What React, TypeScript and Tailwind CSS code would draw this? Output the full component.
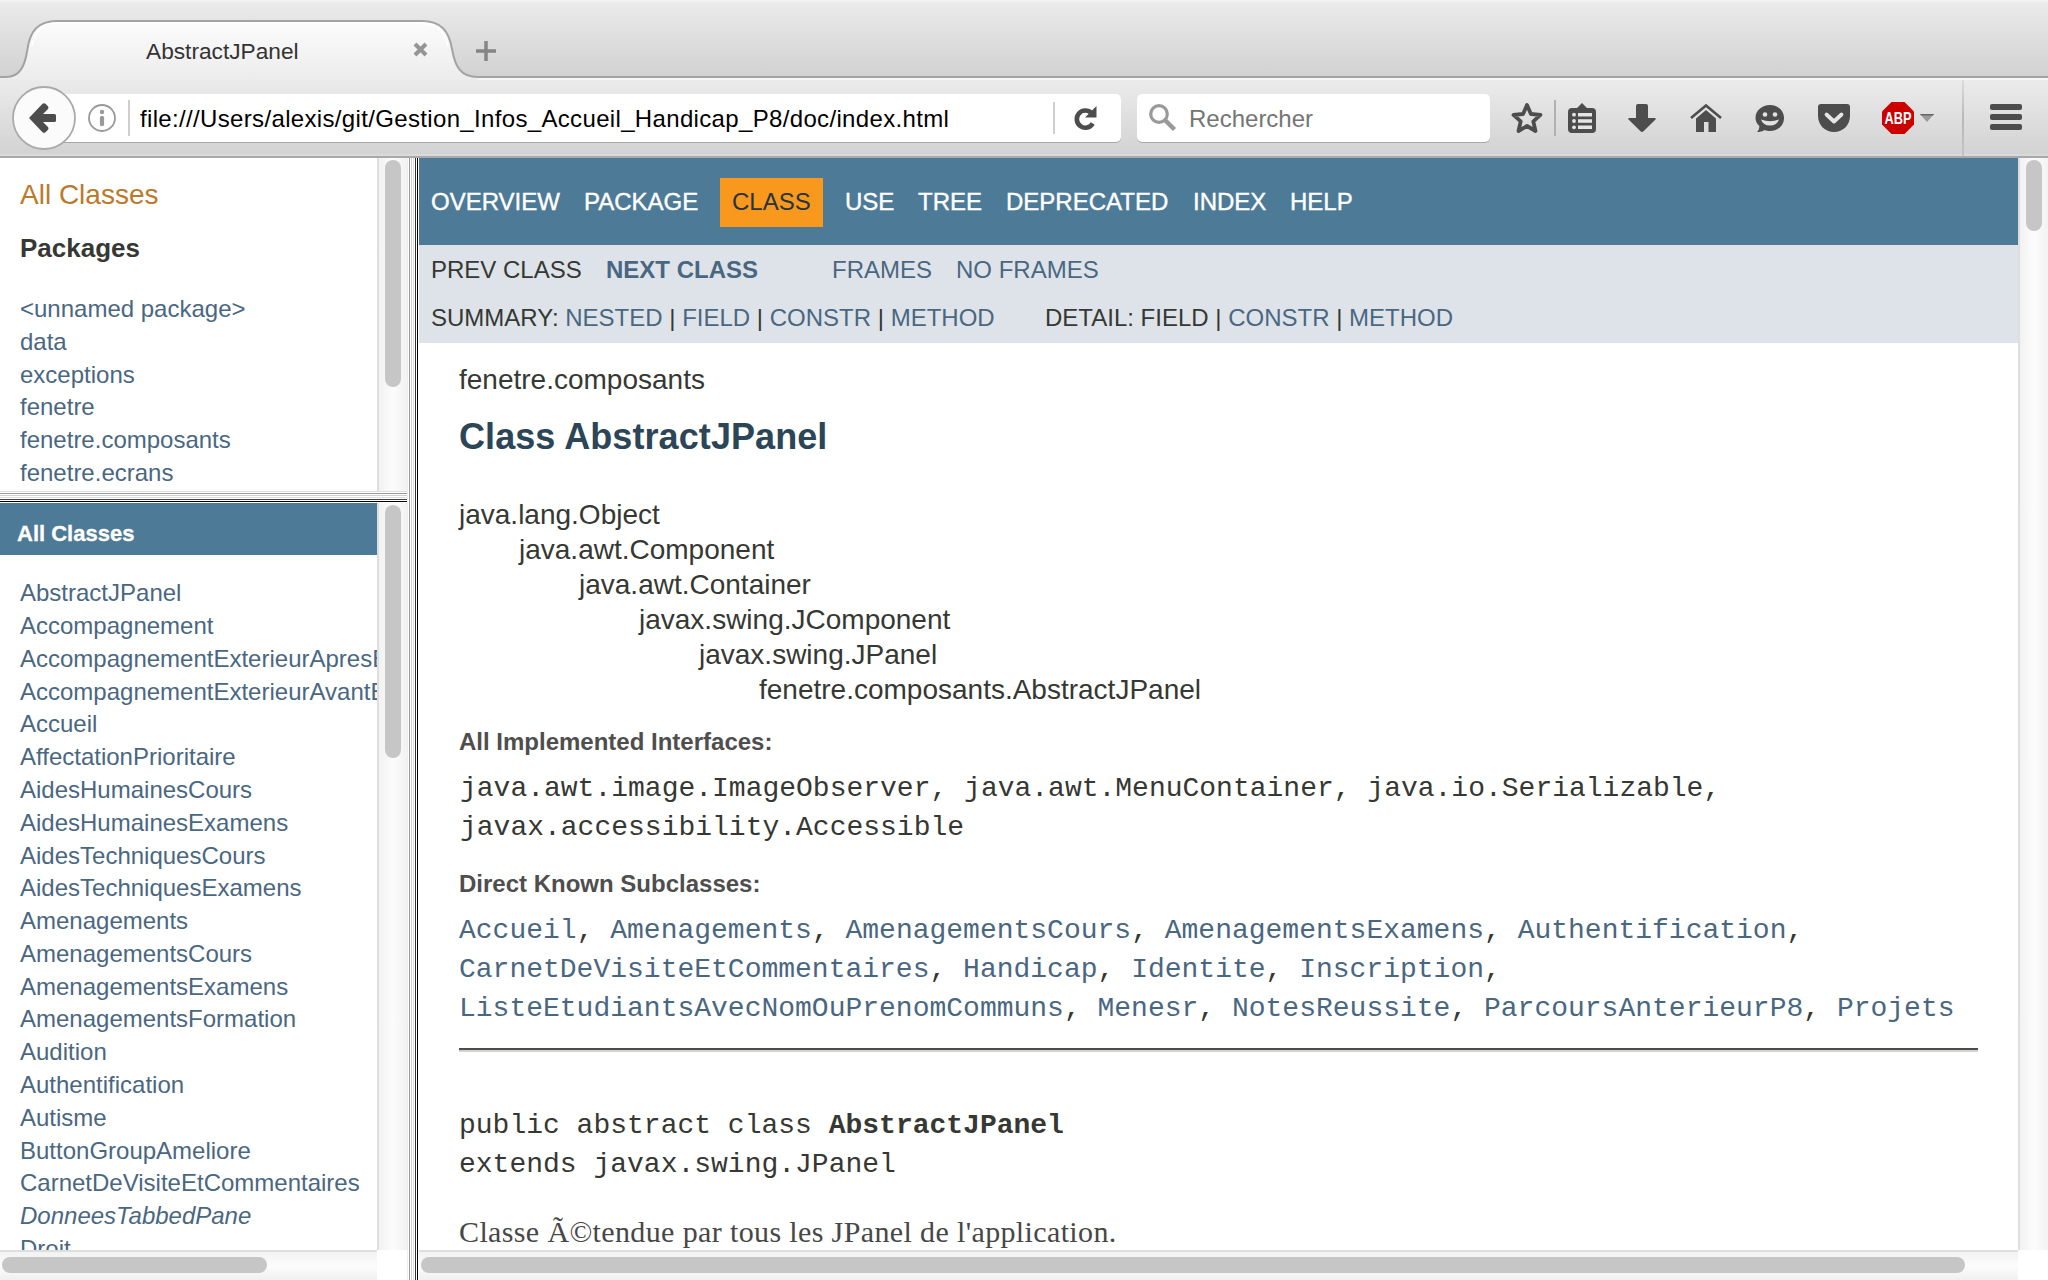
import React from "react";

const packages = ["<unnamed package>", "data", "exceptions", "fenetre", "fenetre.composants", "fenetre.ecrans"];

const classes = [
  "AbstractJPanel", "Accompagnement", "AccompagnementExterieurApresBac", "AccompagnementExterieurAvantBac",
  "Accueil", "AffectationPrioritaire", "AidesHumainesCours", "AidesHumainesExamens", "AidesTechniquesCours",
  "AidesTechniquesExamens", "Amenagements", "AmenagementsCours", "AmenagementsExamens", "AmenagementsFormation",
  "Audition", "Authentification", "Autisme", "ButtonGroupAmeliore", "CarnetDeVisiteEtCommentaires",
  "DonneesTabbedPane", "Droit",
];

const subclassRows = [
  ["Accueil", "Amenagements", "AmenagementsCours", "AmenagementsExamens", "Authentification"],
  ["CarnetDeVisiteEtCommentaires", "Handicap", "Identite", "Inscription"],
  ["ListeEtudiantsAvecNomOuPrenomCommuns", "Menesr", "NotesReussite", "ParcoursAnterieurP8", "Projets"],
];

function TabStrip() {
  return (
    <div className="relative flex h-[78px] shrink-0 border-t-2 border-[#f2f2f2] bg-linear-to-b from-[#ebebeb] to-[#d1d1d1]">
      <svg className="absolute -top-[2px] left-0" width="2048" height="80" viewBox="0 0 2048 80">
        <defs>
          <linearGradient id="tab" x1="0" y1="0" x2="0" y2="1">
            <stop offset="0" stopColor="#fcfcfc" />
            <stop offset="1" stopColor="#ececec" />
          </linearGradient>
        </defs>
        <path d="M0 79H2048" stroke="#f5f5f5" strokeWidth="2" />
        <path d="M0 80V77H6C20 77 25 66 27.500 49C30 31 38 21 57 21H422C441 21 449 31 452 49C455 66 460 77 478 77V80Z" fill="url(#tab)" />
        <path d="M0 77H6C20 77 25 66 27.500 49C30 31 38 21 57 21H422C441 21 449 31 452 49C455 66 460 77 478 77H2048" fill="none" stroke="#a3a3a3" strokeWidth="2" />
        <path d="M32 46C35 31 42 23 57 23H422C437 23 444 31 448 46" fill="none" stroke="#fff" strokeWidth="1.500" />
      </svg>
      <span className="relative ml-[146px] mt-[34px] w-[267px] text-[22.700px] leading-[30px] text-[#333]">AbstractJPanel</span>
      <svg className="relative mt-[40px]" width="15" height="15" viewBox="0 0 15 15">
        <path d="M2 2L13 13M13 2L2 13" stroke="#959595" strokeWidth="4" />
      </svg>
      <svg className="relative ml-[48px] mt-[39px]" width="20" height="20" viewBox="0 0 20 20">
        <path d="M10 0V20M0 10H20" stroke="#858585" strokeWidth="3.500" />
      </svg>
    </div>
  );
}

function Toolbar() {
  return (
    <div className="flex h-[80px] shrink-0 items-start border-b-2 border-[#a9a9a9] bg-linear-to-b from-[#ececec] to-[#d2d2d2] shadow-[inset_0_2px_0_#f5f5f5,inset_0_-2px_0_#dadada]">
      <svg className="relative z-10 ml-[12px] mt-[8px] shrink-0" width="64" height="64" viewBox="0 0 64 64">
        <circle cx="32" cy="32" r="31" fill="#fbfbfb" stroke="#aaa" strokeWidth="1.800" />
        <path d="M17 32L30.500 17.800Q32 16.500 33.500 17.800L36 20.300Q37 21.500 36 23L31 28H42.500Q44 28 44 29.500V34.500Q44 36 42.500 36H31L36 41Q37 42.500 36 43.700L33.500 46.200Q32 47.500 30.500 46.200Z" fill="#4d4d4d" />
      </svg>
      <div className="-ml-[12px] mt-[16px] flex h-[48px] w-[1057px] shrink-0 items-center rounded-r-[5px] bg-white shadow-[0_1px_0_#a8a8a8]">
        <svg className="ml-[24px] shrink-0" width="28" height="28" viewBox="0 0 28 28">
          <circle cx="14" cy="14" r="13" fill="none" stroke="#999" strokeWidth="1.800" />
          <circle cx="14" cy="8" r="2.200" fill="#999" />
          <rect x="11.900" y="12" width="4.200" height="10" rx="1.500" fill="#999" />
        </svg>
        <span className="ml-[12px] h-[36px] w-[2px] bg-[#cfcfcf]" />
        <span className="ml-[10px] w-[913px] whitespace-nowrap pt-[2px] text-[24px] leading-[30px] tracking-[0.340px] text-black">file:///Users/alexis/git/Gestion_Infos_Accueil_Handicap_P8/doc/index.html</span>
        <span className="h-[32px] w-[2px] bg-[#cfcfcf]" />
        <svg className="ml-[19px]" width="24" height="26" viewBox="0 0 24 26">
          <path d="M17.500 8A8.600 8.600 0 1 0 18.800 18.500" fill="none" stroke="#4d4d4d" strokeWidth="4.600" />
          <path d="M22.500 1V12.500H11Z" fill="#4d4d4d" />
        </svg>
      </div>
      <div className="ml-[16px] mt-[16px] flex h-[48px] w-[353px] shrink-0 items-center rounded-[5px] bg-white shadow-[0_1px_0_#a8a8a8]">
        <svg className="ml-[12px]" width="28" height="28" viewBox="0 0 28 28">
          <circle cx="10" cy="10" r="8.300" fill="none" stroke="#999" strokeWidth="3.200" />
          <path d="M16 16L25.500 25.500" stroke="#999" strokeWidth="4.500" />
        </svg>
        <span className="ml-[12px] pt-[2px] text-[24px] leading-[30px] text-[#757575]">Rechercher</span>
      </div>
      <div className="ml-[20px] mt-[22px] flex h-[36px] items-center">
        <svg width="34" height="34" viewBox="0 0 34 34">
          <path d="M17 4L20.900 13L30.500 13.900L23.300 20.300L25.500 30L17 25L8.500 30L10.700 20.300L3.500 13.900L13.100 13Z" fill="none" stroke="#4d4d4d" strokeWidth="3.800" strokeLinejoin="round" />
        </svg>
        <span className="ml-[10px] h-[36px] w-[2px] bg-[#b1b1b1]" />
        <svg className="ml-[12px]" width="28" height="32" viewBox="0 0 28 32">
          <path d="M4 6H9L14 1L19 6H24Q28 6 28 10V27Q28 31 24 31H4Q0 31 0 27V10Q0 6 4 6Z" fill="#4d4d4d" />
          <path d="M10 11H24V14.500H10ZM10 17.300H24V20.800H10ZM10 23.600H24V27.100H10Z" fill="#e6e6e6" />
          <circle cx="6" cy="12.700" r="1.900" fill="#e6e6e6" />
          <circle cx="6" cy="19" r="1.900" fill="#e6e6e6" />
          <circle cx="6" cy="25.300" r="1.900" fill="#e6e6e6" />
        </svg>
        <svg className="ml-[32px]" width="28" height="28" viewBox="0 0 28 28">
          <path d="M10 0H18Q20 0 20 2V14H26.500Q28.500 14 27.500 15.500L15.500 27.300Q14 28.500 12.500 27.300L.5 15.500Q-.5 14 1.500 14H8V2Q8 0 10 0Z" fill="#4d4d4d" />
        </svg>
        <svg className="ml-[34px]" width="32" height="28" viewBox="0 0 32 28">
          <path d="M1 14L16 1.500L31 14" fill="none" stroke="#4d4d4d" strokeWidth="2.600" />
          <path d="M6 14.500L16 6L26 14.500V28H18.500V18H14V28H6Z" fill="#4d4d4d" />
        </svg>
        <svg className="ml-[33px]" width="30" height="28" viewBox="0 0 30 28">
          <path d="M15 1C23 1 29 6.500 29 14C29 21.500 23 27 15 27C13 27 11 26.600 9.500 26C7.500 27.500 5 28 2 28C3.800 26 4.500 24 4.300 22C2 20 .5 17 .5 14C.5 6.500 7 1 15 1Z" fill="#4d4d4d" />
          <circle cx="10" cy="10.500" r="2.300" fill="#e2e2e2" />
          <circle cx="20" cy="10.500" r="2.300" fill="#e2e2e2" />
          <path d="M6 15.500Q15 19 24 15.500Q22 21.500 15 21.500Q8 21.500 6 15.500Z" fill="#e2e2e2" />
        </svg>
        <svg className="ml-[33px]" width="32" height="28" viewBox="0 0 32 28">
          <path d="M3 0H29Q32 0 32 3V12C32 21 25 28 16 28C7 28 0 21 0 12V3Q0 0 3 0Z" fill="#4d4d4d" />
          <path d="M8.500 10.500L16 17.500L23.500 10.500" fill="none" stroke="#e6e6e6" strokeWidth="3.800" strokeLinecap="round" strokeLinejoin="round" />
        </svg>
        <svg className="ml-[32px]" width="32" height="32" viewBox="0 0 32 32">
          <path d="M9.500 0H22.500L32 9.500V22.500L22.500 32H9.500L0 22.500V9.500Z" fill="#cc0000" />
          <text x="16" y="22" textAnchor="middle" fontSize="17" fontWeight="700" fill="#fff" textLength="27" lengthAdjust="spacingAndGlyphs">ABP</text>
        </svg>
        <svg className="ml-[6px]" width="14" height="8" viewBox="0 0 14 8">
          <path d="M0 0H14L7 8Z" fill="#9a9a9a" />
          <path d="M0 0H14L13 1.500H1Z" fill="#666" />
        </svg>
      </div>
      <span className="ml-[28px] mt-[2px] h-[76px] w-[2px] bg-linear-to-b from-[#dcdcdc] via-[#b8b8b8] to-[#c4c4c4]" />
      <div className="ml-[26px] mt-[26px] flex w-[32px] flex-col gap-1">
        <span className="h-[6px] rounded-[2px] bg-[#4d4d4d]" />
        <span className="h-[6px] rounded-[2px] bg-[#4d4d4d]" />
        <span className="h-[6px] rounded-[2px] bg-[#4d4d4d]" />
      </div>
    </div>
  );
}

function VScroll({ thumb }: { thumb: string }) {
  return (
    <div className="flex w-[30px] shrink-0 border-l-2 border-[#dedede] bg-linear-to-r from-[#f2f2f2] via-[#fcfcfc] to-[#f2f2f2] pt-[2px]">
      <div className={thumb} />
    </div>
  );
}

function HScroll({ thumb }: { thumb: string }) {
  return (
    <div className="flex h-[30px] shrink-0">
      <div className="flex flex-1 items-start border-t-2 border-[#dedede] bg-linear-to-b from-[#f2f2f2] via-[#fcfcfc] to-[#f0f0f0] pl-[2px] pt-[5px]">
        <div className={thumb} />
      </div>
      <div className="w-[30px] bg-white" />
    </div>
  );
}

function Sidebar() {
  return (
    <div className="flex w-[407px] shrink-0 flex-col">
      <div className="flex h-[333px] shrink-0">
        <div className="w-[377px] overflow-hidden pl-[20px] pt-[21px]">
          <div className="text-[28px] leading-[32px] text-[#bb7a2a]">All Classes</div>
          <div className="mt-[22px] text-[26px] font-bold leading-[30px] text-[#353833]">Packages</div>
          <ul className="mt-[30px] text-[24px] leading-[32.800px] text-[#4a6782]">
            {packages.map((p) => <li key={p}>{p}</li>)}
          </ul>
        </div>
        <VScroll thumb="ml-[6px] h-[227px] w-[16px] rounded-full bg-[#c6c6c6]" />
      </div>
      <div className="h-[12px] shrink-0 bg-[linear-gradient(to_bottom,#dedede_0_1px,#fff_1px_2px,#999_2px_3px,#fff_3px_4px,#d0d0d0_4px_5px,#fff_5px_6px,#dedede_6px_7px,#fff_7px_8px,#444_8px_9px,#fff_9px_10px,#000_10px_11px,#fff_11px_12px)]" />
      <div className="flex min-h-0 flex-1">
        <div className="w-[377px] overflow-hidden">
          <div className="h-[52px] bg-[#4d7a97] pl-[17px] pt-[19px] text-[22px] font-bold leading-[24px] text-white [-webkit-text-stroke:0.3px]">All Classes</div>
          <ul className="mt-[22.300px] whitespace-nowrap pl-[20px] text-[24px] leading-[32.780px] text-[#4a6782]">
            {classes.map((c) => <li key={c} className={c === "DonneesTabbedPane" ? "italic" : ""}>{c}</li>)}
          </ul>
        </div>
        <VScroll thumb="ml-[6px] h-[253px] w-[16px] rounded-full bg-[#c6c6c6]" />
      </div>
      <HScroll thumb="h-[16px] w-[265px] rounded-full bg-[#c6c6c6]" />
    </div>
  );
}

function Link({ children }: { children: React.ReactNode }) {
  return <a className="text-[#4a6782]">{children}</a>;
}

function Main() {
  return (
    <div className="flex min-w-0 flex-1 flex-col">
      <div className="flex min-h-0 flex-1">
        <div className="min-w-0 flex-1 overflow-hidden">
          <nav className="flex h-[87px] bg-[#4d7a97] pl-[12px] pt-[20px] text-[24px] leading-[47px] text-white [-webkit-text-stroke:0.4px]">
            <span className="w-[153px]">OVERVIEW</span>
            <span className="w-[136px]">PACKAGE</span>
            <span className="h-[49px] w-[103px] bg-[#f8981d] pl-[12px] text-[#253441] [-webkit-text-stroke:0]">CLASS</span>
            <span className="ml-[22px] w-[73px]">USE</span>
            <span className="w-[88px]">TREE</span>
            <span className="w-[187px]">DEPRECATED</span>
            <span className="w-[97px]">INDEX</span>
            <span>HELP</span>
          </nav>
          <div className="h-[98px] whitespace-nowrap bg-[#dee3e9] pl-[12px] pt-[1px] text-[24px] leading-[48px] text-[#353833]">
            <div className="flex">
              <span className="w-[175px]">PREV CLASS</span>
              <a className="w-[226px] font-bold text-[#4a6782]">NEXT CLASS</a>
              <a className="w-[124px] text-[#4a6782]">FRAMES</a>
              <Link>NO FRAMES</Link>
            </div>
            <div className="flex">
              <span className="w-[614px]">SUMMARY: <Link>NESTED</Link> | <Link>FIELD</Link> | <Link>CONSTR</Link> | <Link>METHOD</Link></span>
              <span>DETAIL: FIELD | <Link>CONSTR</Link> | <Link>METHOD</Link></span>
            </div>
          </div>
          <div className="px-[40px] pt-[19px] text-[28px] leading-[35px] text-[#353833]">
            <div>fenetre.composants</div>
            <h1 className="mt-[19px] text-[36px] font-bold leading-[42px] tracking-[0.080px] text-[#2c4557]">Class AbstractJPanel</h1>
            <div className="mt-[39px]">
              <div>java.lang.Object</div>
              <div className="pl-[60px]">java.awt.Component</div>
              <div className="pl-[120px]">java.awt.Container</div>
              <div className="pl-[180px]">javax.swing.JComponent</div>
              <div className="pl-[240px]">javax.swing.JPanel</div>
              <div className="pl-[300px]">fenetre.composants.AbstractJPanel</div>
            </div>
            <h2 className="mt-[20px] text-[24px] font-bold leading-[30px] text-[#4e4e4e]">All Implemented Interfaces:</h2>
            <div className="mt-[12px] whitespace-pre pl-px font-['Liberation_Mono',monospace] leading-[39px]">
              <div>java.awt.image.ImageObserver, java.awt.MenuContainer, java.io.Serializable,</div>
              <div>javax.accessibility.Accessible</div>
            </div>
            <h2 className="mt-[22px] text-[24px] font-bold leading-[30px] text-[#4e4e4e]">Direct Known Subclasses:</h2>
            <div className="mt-[12px] whitespace-pre font-['Liberation_Mono',monospace] leading-[39px]">
              {subclassRows.map((row, i) => (
                <div key={row[0]}>
                  {row.map((name, j) => (
                    <React.Fragment key={name}>
                      <Link>{name}</Link>
                      {j < row.length - 1 ? ", " : i < 2 ? "," : ""}
                    </React.Fragment>
                  ))}
                </div>
              ))}
            </div>
            <div className="mt-[20px] h-[4px] border-b-2 border-t-2 border-b-[#d3d3d3] border-t-[#4a4d48]" />
            <div className="mt-[54px] whitespace-pre font-['Liberation_Mono',monospace] leading-[39px]">
              <div>public abstract class <b>AbstractJPanel</b></div>
              <div>extends javax.swing.JPanel</div>
            </div>
            <p className="mt-[30px] whitespace-nowrap font-['Liberation_Serif',serif] text-[30px] tracking-[0.370px] text-[#474747]">Classe Ã©tendue par tous les JPanel de l'application.</p>
          </div>
        </div>
        <VScroll thumb="ml-[6px] h-[71px] w-[16px] rounded-full bg-[#c6c6c6]" />
      </div>
      <HScroll thumb="h-[16px] w-[1544px] rounded-full bg-[#c6c6c6]" />
    </div>
  );
}

export default function App() {
  return (
    <div className="flex h-[1280px] w-[2048px] flex-col overflow-hidden bg-white font-['Liberation_Sans',Arial,sans-serif]">
      <TabStrip />
      <Toolbar />
      <div className="flex min-h-0 flex-1">
        <Sidebar />
        <div className="w-[12px] shrink-0 bg-[linear-gradient(to_right,#eee_0_1px,#fff_1px_2px,#999_2px_3px,#fff_3px_4px,#d0d0d0_4px_5px,#fff_5px_6px,#dedede_6px_7px,#fff_7px_8px,#333_8px_9px,#fff_9px_10px,#000_10px_11px,#fff_11px_12px)]" />
        <Main />
      </div>
    </div>
  );
}
